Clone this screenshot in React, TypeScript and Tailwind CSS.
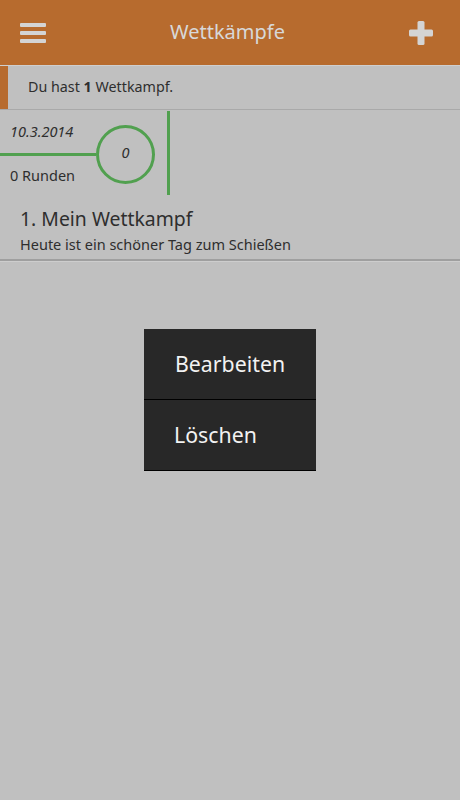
export default function App() {
  return (
    <div
      className="relative w-[460px] h-[800px] overflow-hidden bg-[#c0c0c0] text-[#2e2e2e]"
      style={{ fontFamily: '"Noto Sans", "Open Sans", sans-serif' }}
    >
      {/* Action bar */}
      <div className="h-[65px] bg-[#b76b2e] flex items-center justify-between pl-[20px] pr-[27px]">
        <svg width="26" height="22" viewBox="0 0 26 22">
          <rect x="0" y="1" width="26" height="4" rx="1" fill="#d4d4d4" />
          <rect x="0" y="9" width="26" height="4" rx="1" fill="#d4d4d4" />
          <rect x="0" y="17" width="26" height="4" rx="1" fill="#d4d4d4" />
        </svg>
        <div className="text-[20px] text-[#d8d8d8] pb-px">Wettkämpfe</div>
        <svg width="24" height="24" viewBox="0 0 24 24">
          <rect x="8.5" y="0" width="7" height="24" rx="1.5" fill="#d4d4d4" />
          <rect x="0" y="8.5" width="24" height="7" rx="1.5" fill="#d4d4d4" />
        </svg>
      </div>
      <div className="h-px bg-[#cfcfcf]" />

      {/* Info bar */}
      <div className="flex h-[44px] border-b border-[#a9a9a9]">
        <div className="w-[8px] bg-[#b76b2e]" />
        <div className="pl-[20px] flex items-center text-[14.3px] pb-[2px]">
          Du hast&nbsp;<span className="font-bold">1</span>&nbsp;Wettkampf.
        </div>
      </div>

      {/* Competition item */}
      <div className="border-b-2 border-[#9f9f9f]">
        <div className="flex h-[86px]">
          <div className="w-[96px] flex flex-col pt-[11px]">
            <div className="pl-[10px] text-[14.5px] italic leading-[20px]">10.3.2014</div>
            <div className="h-[3px] bg-[#51a04f] mt-[12px]" />
            <div className="pl-[10px] text-[14.5px] leading-[20px] mt-[9px]">0 Runden</div>
          </div>
          <div className="w-[59px] h-[59px] mt-[15px] rounded-full border-[3px] border-[#51a04f] flex items-center justify-center text-[14.5px] italic pb-[4px]">
            0
          </div>
          <div className="w-[3px] h-[84px] bg-[#51a04f] ml-[12px] mt-px" />
        </div>
        <div className="pl-[20px] pt-[10px] pb-[2px]">
          <div className="text-[19.4px] leading-[26px]">1. Mein Wettkampf</div>
          <div className="text-[14.5px] leading-[25px]">Heute ist ein schöner Tag zum Schießen</div>
        </div>
      </div>
      <div className="h-px bg-[#cdcdcd]" />

      {/* Context menu */}
      <div className="absolute left-[144px] top-[329px] w-[172px] bg-[#282828] text-[#f2f2f2] text-[21.3px]">
        <div className="h-[70px] flex items-center pl-[31px] pb-[1px]">Bearbeiten</div>
        <div className="h-px bg-black" />
        <div className="h-[70px] flex items-center pl-[30px]">Löschen</div>
        <div className="h-px bg-black" />
      </div>
    </div>
  );
}
